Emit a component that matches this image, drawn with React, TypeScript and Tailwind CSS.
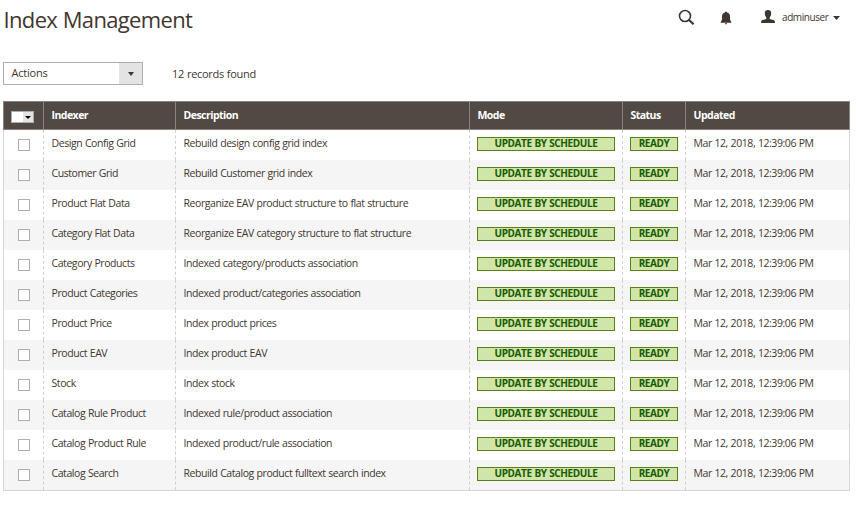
import React from "react";

const rows: [string, string][] = [
  ["Design Config Grid", "Rebuild design config grid index"],
  ["Customer Grid", "Rebuild Customer grid index"],
  ["Product Flat Data", "Reorganize EAV product structure to flat structure"],
  ["Category Flat Data", "Reorganize EAV category structure to flat structure"],
  ["Category Products", "Indexed category/products association"],
  ["Product Categories", "Indexed product/categories association"],
  ["Product Price", "Index product prices"],
  ["Product EAV", "Index product EAV"],
  ["Stock", "Index stock"],
  ["Catalog Rule Product", "Indexed rule/product association"],
  ["Catalog Product Rule", "Indexed product/rule association"],
  ["Catalog Search", "Rebuild Catalog product fulltext search index"],
];

const columns = "grid grid-cols-[40px_132px_294px_153px_63px_1fr]";
const headCell = "border-r border-[#8a837f] pl-[7.5px] pt-1";
const cell = "border-r border-dashed border-[#d0d0d0] pt-1";

function Badge({ children, className }: { children: string; className: string }) {
  return (
    <span
      className={`mt-[3px] ml-[7px] block h-[14px] border border-[#5b8116] bg-[#d0e5a9] text-center text-[10px] leading-[11px] font-bold tracking-[-0.4px] [word-spacing:0.5px] text-[#185b00] ${className}`}
    >
      {children}
    </span>
  );
}

export default function App() {
  return (
    <div className="h-[509px] w-[856px] overflow-hidden bg-white pt-[6px] pl-[3px] font-['Open_Sans',sans-serif] text-[10.5px] leading-[18px] tracking-[-0.43px] [word-spacing:0.4px] whitespace-nowrap text-[#41362f]">
      <header className="flex h-[56px] items-start">
        <h1 className="-mt-px w-[675px] pl-[0.5px] text-[22px] leading-[28px] tracking-[-0.65px]">Index Management</h1>
        <svg className="mt-[3px] h-[17px] w-[17px]" viewBox="0 0 17 17" fill="none" stroke="#41362f">
          <circle cx="7" cy="7" r="5.5" strokeWidth="1.6" />
          <path d="M11 11l4.600 4.300" strokeWidth="2.200" />
        </svg>
        <svg className="mt-[5px] ml-[25px] h-[14px] w-[12px]" viewBox="0 0 12 14" fill="#41362f">
          <path d="M5 1.500V.8h2v.7C9.300 2 10 3.500 10 5.500V8.500L11.600 11.800H.4L2 8.500V5.500C2 3.500 2.700 2 5 1.500zM4.700 12.300h2.600l-.6.900H5.300z" />
        </svg>
        <svg className="mt-[4px] ml-[29px] h-[14px] w-[14px]" viewBox="0 0 14 14" fill="#41362f">
          <path d="M7 0C4.700 0 3.600 1.500 3.800 3.600c.1 1.700.7 2.900 1.500 3.800v1.500L1.500 10C.5 10.400 0 11 0 13h14c0-2-.5-2.600-1.500-3L8.700 8.900V7.400c.8-.9 1.400-2.100 1.500-3.800C10.400 1.500 9.300 0 7 0z" />
        </svg>
        <span className="mt-[2px] ml-[7px] w-[51px] text-[10px] tracking-[-0.42px]">adminuser</span>
        <svg className="mt-[10px] h-[4px] w-[7px]" viewBox="0 0 7 4" fill="#41362f">
          <path d="M0 0h7L3.500 4z" />
        </svg>
      </header>
      <div className="flex h-[39px]">
        <div className="flex h-[23px] w-[140px] border border-[#adadad]">
          <span className="w-[115px] pt-[1px] pl-[7.5px] text-[11px] tracking-[-0.2px]">Actions</span>
          <span className="flex flex-1 items-center justify-center bg-[#e3e3e3]">
            <svg className="h-[4px] w-[6px]" viewBox="0 0 6 4" fill="#41362f">
              <path d="M0 0h6L3 4z" />
            </svg>
          </span>
        </div>
        <span className="mt-[3px] ml-[29px] text-[11px] tracking-[-0.3px]">12 records found</span>
      </div>
      <div className="w-[847px]">
        <div className={`${columns} h-[29px] border border-[#8a837f] bg-[#514943] font-bold tracking-[-0.53px] text-white`}>
          <div className="border-r border-[#8a837f] pt-[9px] pl-[7px]">
            <div className="flex h-[12px] w-[23px] border border-[#adadad] bg-white">
              <span className="w-[11px]" />
              <span className="flex flex-1 items-center justify-center bg-[#e3e3e3]">
                <svg className="h-[3px] w-[6px]" viewBox="0 0 6 3" fill="#000">
                  <path d="M0 0h6L3 3z" />
                </svg>
              </span>
            </div>
          </div>
          <div className={headCell}>Indexer</div>
          <div className={headCell}>Description</div>
          <div className={headCell}>Mode</div>
          <div className={headCell}>Status</div>
          <div className="pt-1 pl-[7.5px]">Updated</div>
        </div>
        <div className="border-x border-b border-[#d6d6d6]">
          {rows.map(([name, description]) => (
            <div key={name} className={`${columns} h-[30px] even:bg-[#f5f5f5]`}>
              <div className="border-r border-dashed border-[#d0d0d0] pt-[9px] pl-[14px]">
                <span className="block h-[12px] w-[12px] border border-[#adadad] bg-white" />
              </div>
              <div className={`${cell} pl-[7.5px]`}>{name}</div>
              <div className={`${cell} pl-[7.5px]`}>{description}</div>
              <div className={cell}>
                <Badge className="w-[138px]">UPDATE BY SCHEDULE</Badge>
              </div>
              <div className={cell}>
                <Badge className="w-[48px]">READY</Badge>
              </div>
              <div className="pt-1 pl-[7.5px]">Mar 12, 2018, 12:39:06 PM</div>
            </div>
          ))}
        </div>
      </div>
    </div>
  );
}
